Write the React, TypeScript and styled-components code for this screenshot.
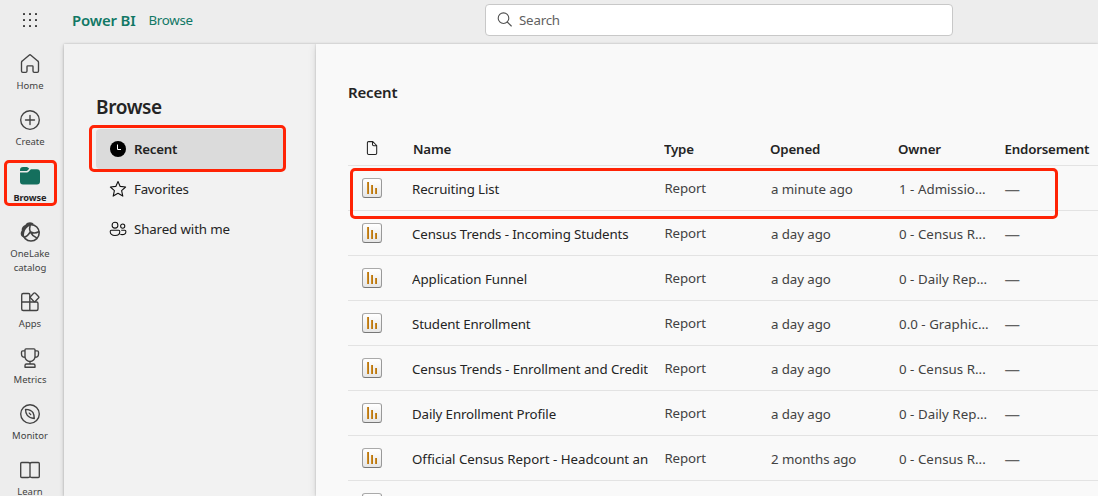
import React from "react";
import styled, { createGlobalStyle } from "styled-components";

const GlobalStyle = createGlobalStyle`
  * { box-sizing: border-box; }
  html, body { margin: 0; padding: 0; overflow: hidden; }
  body { font-family: "Noto Sans", "Open Sans", sans-serif; color: #242424; background: #ededed; }
  svg { display: block; flex: none; }
`;

const Shell = styled.div`
  width: 1098px;
  height: 496px;
  display: flex;
  flex-direction: column;
  overflow: hidden;
  background: #ededed;
`;

const TopBar = styled.header`
  height: 44px;
  flex: none;
  display: flex;
  align-items: center;
  padding: 0 0 4px 22px;
`;

const Brand = styled.span`
  margin-left: 34px;
  width: 76.5px;
  font-size: 14.9px;
  font-weight: 600;
  line-height: 20px;
  letter-spacing: -0.15px;
  color: #117865;
  white-space: nowrap;
`;

const Crumb = styled.span`
  width: 336.5px;
  font-size: 13.3px;
  letter-spacing: -0.3px;
  line-height: 20px;
  color: #117865;
`;

const SearchBox = styled.div`
  width: 468px;
  height: 32px;
  display: flex;
  align-items: center;
  gap: 6px;
  padding-left: 11px;
  border: 1px solid #c8c8c8;
  border-radius: 4px;
  background: #fff;
  color: #616161;
  font-size: 13.3px;
  letter-spacing: -0.2px;
`;

const Body = styled.div`
  flex: 1;
  min-height: 0;
  display: flex;
`;

const Rail = styled.nav`
  width: 64px;
  flex: none;
  padding-right: 4px;
`;

const RailItem = styled.div<{ $active?: boolean }>`
  position: relative;
  display: flex;
  flex-direction: column;
  align-items: center;
  gap: 5px;
  padding: 10px 0 7px;
  color: #424242;
  text-align: center;
  font-size: 9.5px;
  line-height: 14px;
  white-space: pre-line;
  ${(p) => p.$active && "color: #242424; font-weight: 700; font-size: 9.2px; letter-spacing: -0.1px;"}
`;

const Mark = styled.div<{ $x: number; $y: number; $w: number; $h: number }>`
  position: absolute;
  left: ${(p) => p.$x}px;
  top: ${(p) => p.$y}px;
  width: ${(p) => p.$w}px;
  height: ${(p) => p.$h}px;
  border: 3px solid #ff2305;
  border-radius: 5px;
  pointer-events: none;
`;

const Workspace = styled.div`
  flex: 1;
  min-width: 0;
  display: flex;
  background: #f2f2f2;
  box-shadow: 0 0 2px rgba(0, 0, 0, 0.2), 0 2px 5px rgba(0, 0, 0, 0.18);
`;

const SidePanel = styled.aside`
  width: 252px;
  flex: none;
  padding: 49px 32px 0;
`;

const PanelTitle = styled.h1`
  margin: 0 0 8px;
  font-size: 19px;
  line-height: 28px;
  font-weight: 600;
  letter-spacing: -0.35px;
`;

const SideItem = styled.div<{ $active?: boolean; $spacing: number }>`
  position: relative;
  height: 40px;
  display: flex;
  align-items: center;
  gap: 7px;
  padding-left: 13px;
  border-radius: 4px;
  font-size: 13.3px;
  letter-spacing: ${(p) => p.$spacing}px;
  background: ${(p) => (p.$active ? "#dbdbdb" : "transparent")};
  font-weight: ${(p) => (p.$active ? 600 : 400)};
`;

const Content = styled.main`
  flex: 1;
  min-width: 0;
  padding: 37px 0 0 32px;
  background: #f9f9f9;
  box-shadow: 0 0 2px rgba(0, 0, 0, 0.2), 0 2px 8px rgba(0, 0, 0, 0.13);
  clip-path: inset(0 0 0 -12px);
`;

const SectionTitle = styled.h2`
  margin: 0 0 29px;
  font-size: 15px;
  line-height: 22px;
  font-weight: 600;
  letter-spacing: -0.18px;
`;

const Row = styled.div<{ $head?: boolean }>`
  position: relative;
  display: grid;
  grid-template-columns: 64px 236px 16px 106px 128px 106px 94px;
  align-items: center;
  height: ${(p) => (p.$head ? 34 : 45)}px;
  border-bottom: 1px solid #e3e3e3;
  font-size: 13.3px;
  font-weight: ${(p) => (p.$head ? 600 : 400)};
  line-height: 20px;
`;

const Cell = styled.div<{ $spacing?: number; $shift?: number; $tone?: string; $drop?: number }>`
  min-width: 0;
  overflow: hidden;
  white-space: nowrap;
  padding-left: ${(p) => p.$shift ?? 0}px;
  padding-top: ${(p) => p.$drop ?? 0}px;
  letter-spacing: ${(p) => p.$spacing ?? 0}px;
  color: ${(p) => p.$tone ?? "#242424"};
`;

const DashCell = styled(Cell)`
  font-size: 15.5px;
`;

const IconCell = styled.div`
  padding-left: 14px;
`;

const ReportBadge = styled.div`
  width: 20px;
  height: 20px;
  border: 1px solid #8c8c8c;
  border-color: #aaa #999 #777;
  border-radius: 3px;
  background: linear-gradient(#fff, #e6e6e6);
  display: flex;
  align-items: flex-end;
  justify-content: center;
  gap: 2px;
  padding-bottom: 3px;
`;

const Bar = styled.i<{ $h: number }>`
  width: 2px;
  height: ${(p) => p.$h}px;
  background: linear-gradient(90deg, #d9962b, #ac6c0c);
`;

const Line = ({ children, w = 1.35 }: { children: React.ReactNode; w?: number }) => (
  <svg width="20" height="20" viewBox="0 0 20 20" fill="none" stroke="currentColor" strokeWidth={w} strokeLinejoin="round" strokeLinecap="round">
    {children}
  </svg>
);

const WaffleIcon = () => (
  <svg width="16" height="16" viewBox="0 0 16 16" fill="#333">
    {[2, 8, 14].map((y) => [2, 8, 14].map((x) => <rect key={`${x}-${y}`} x={x - 1} y={y - 1} width="2" height="2" rx=".4" />))}
  </svg>
);

const HomeIcon = () => (
  <Line><path d="M9.1 1.2a1.4 1.4 0 0 1 1.8 0l6.8 5.7c.5.4.8 1 .8 1.6v8.6c0 .8-.5 1.3-1.3 1.3h-2.900c-.8 0-1.300-.5-1.300-1.300v-4.500c0-.5-.3-.8-.8-.8H7.800c-.5 0-.8.3-.8.8v4.500c0 .8-.5 1.300-1.300 1.300H2.800c-.8 0-1.300-.5-1.300-1.300V8.500c0-.6.3-1.200.8-1.600Z" /></Line>
);
const CreateIcon = () => (
  <Line><circle cx="10" cy="10" r="9.300" /><path d="M10 5.500v9M5.500 10h9" /></Line>
);
const FolderIcon = () => (
  <svg width="20" height="20" viewBox="0 0 20 20" fill="#146f5d">
    <path d="M0 4.900V4a3 3 0 0 1 3-3h3.700c.5 0 .9.200 1.300.500l1.200 1.200-1.700 1.700c-.2.300-.5.500-.8.500Z" />
    <path d="M0 6.400h7c.6 0 1.100-.2 1.500-.6L10.900 3.300H17a3 3 0 0 1 3 3v9.200a3 3 0 0 1-3 3H3a3 3 0 0 1-3-3Z" />
  </svg>
);
const LakeIcon = () => (
  <Line w={1.6}>
    <circle cx="11" cy="10.800" r="8.200" />
    <path d="M5.500 2.800C6.600 1 8.200.3 10 .3s3.200.7 4 2c-2.200.3-4.200 1.200-6.100 2.700C5.500 6.800 4.100 9.500 4 12.800l-.5 2.700C1.700 14.900.7 13.600.7 11.600c0-1.100.4-2 1-2.900C1.300 6.100 3 3.700 5.500 2.800Z" fill="currentColor" stroke="none" />
    <path d="M10.100 3.500c-.8 2.500-.8 4.400.2 6.300 1.200 2.500 3.200 4.400 6 5.800M4.300 15.300c2.600-.8 4.300-2.500 6-5.500 2.600 1.600 5.500 1.500 8.500-.1" />
  </Line>
);
const AppsIcon = () => (
  <Line>
    <path d="M9.800 10V2.800c0-.8-.5-1.300-1.300-1.300H3.200c-.9 0-1.500.6-1.500 1.500V17c0 .9.600 1.500 1.500 1.500h13.300c.9 0 1.500-.6 1.500-1.500v-5.500c0-.9-.6-1.500-1.500-1.500ZM9.800 10v8.500M1.700 10h8.100" />
    <path d="m13.700 1.300-3.100 3.100c-.5.500-.5 1.200 0 1.700l3.100 3.100c.5.500 1.200.5 1.700 0l3.100-3.100c.5-.5.5-1.200 0-1.700l-3.100-3.100c-.5-.5-1.200-.5-1.700 0Z" />
  </Line>
);
const TrophyIcon = () => (
  <Line>
    <path d="M6 .8h8c.6 0 1 .4 1 1v6.700a5 5 0 0 1-10 0V1.800c0-.6.4-1 1-1ZM5 2.900H2.800c-.8 0-1.300.5-1.300 1.300V6c0 2 1.200 3.300 3.500 3.300M15 2.900h2.200c.8 0 1.300.5 1.300 1.300V6c0 2-1.200 3.300-3.500 3.300M10 13.500V16M6.500 16h7c.9 0 1.500.6 1.500 1.500v1.700H5v-1.700c0-.9.600-1.500 1.500-1.500Z" />
  </Line>
);
const MonitorIcon = () => (
  <Line><circle cx="10" cy="10" r="9.300" /><path d="M5.500 5.300c3.300.2 6.300 1.300 7.500 3.300 1 1.700 1.200 3.700 1.300 5.900-3.200-.3-5.500-1.300-7-3.200-1.300-1.700-1.800-3.700-1.800-6Z" /><path d="m9.300 9.100 1.400 1.500" /></Line>
);
const LearnIcon = () => (
  <Line><path d="M10 3.500c-.4-.7-1-1-1.800-1H1.700c-.6 0-1 .4-1 1v13c0 .6.400 1 1 1h6.500c.8 0 1.400-.3 1.800-1 .4.700 1 1 1.800 1h6.500c.6 0 1-.4 1-1v-13c0-.6-.4-1-1-1h-6.500c-.8 0-1.400.3-1.800 1Zm0 0v13" /></Line>
);

const SearchIcon = () => (
  <svg width="16" height="16" viewBox="0 0 16 16" fill="none" stroke="#505050" strokeWidth="1.100" strokeLinecap="round">
    <circle cx="6.500" cy="6.200" r="5.300" /><path d="m10.300 10 4 4" />
  </svg>
);
const ClockIcon = () => (
  <svg width="18" height="18" viewBox="0 0 18 18"><circle cx="9" cy="9" r="8" fill="#000" /><path d="M8.500 4.500v5h3.500" fill="none" stroke="#fff" /></svg>
);
const StarIcon = () => (
  <svg width="18" height="18" viewBox="0 0 18 18" fill="none" stroke="#111" strokeWidth="1.100" strokeLinejoin="round">
    <path d="m9 1.500 2.200 4.900 5.400.6-4 3.600 1.200 5.500L9 13.300l-4.800 2.800 1.200-5.500-4-3.600 5.400-.6Z" />
  </svg>
);
const PeopleIcon = () => (
  <svg width="18" height="18" viewBox="0 0 18 18" fill="none" stroke="#111" strokeWidth="1.050" strokeLinejoin="round">
    <circle cx="6" cy="5.200" r="2.900" /><circle cx="13.700" cy="6.100" r="2.100" />
    <path d="M2.300 10.300h7.400c.6 0 1.100.5 1.100 1.100 0 2.500-1.700 4.100-4.800 4.100s-4.800-1.600-4.800-4.100c0-.6.5-1.100 1.100-1.100ZM12.200 10.300h3.600c.6 0 1.100.5 1.100 1.100 0 2-1.500 3.200-3.800 3.200-.7 0-1.300-.1-1.800-.3" />
  </svg>
);
const FileIcon = () => (
  <svg width="20" height="16" viewBox="0 0 20 16" fill="none" stroke="#242424" strokeWidth="1.050" strokeLinejoin="round">
    <path d="M6.700.6h4.100l3.900 3.900v7.700c0 .8-.5 1.300-1.300 1.300H6.700c-.8 0-1.300-.5-1.300-1.300V1.900c0-.8.5-1.300 1.300-1.300ZM10.500.6v2.800c0 .8.500 1.300 1.300 1.300h2.800" />
  </svg>
);

const railItems = [
  { label: "Home", icon: <HomeIcon /> },
  { label: "Create", icon: <CreateIcon /> },
  { label: "Browse", icon: <FolderIcon />, active: true },
  { label: "OneLake\ncatalog", icon: <LakeIcon /> },
  { label: "Apps", icon: <AppsIcon /> },
  { label: "Metrics", icon: <TrophyIcon /> },
  { label: "Monitor", icon: <MonitorIcon /> },
  { label: "Learn", icon: <LearnIcon /> },
];

const rows = [
  { name: "Recruiting List", opened: "a minute ago", owner: "1 - Admissio...", marked: true, spacing: -0.12 },
  { name: "Census Trends - Incoming Students", opened: "a day ago", owner: "0 - Census R...", spacing: -0.11 },
  { name: "Application Funnel", opened: "a day ago", owner: "0 - Daily Rep...", spacing: -0.05 },
  { name: "Student Enrollment", opened: "a day ago", owner: "0.0 - Graphic...", spacing: -0.15 },
  { name: "Census Trends - Enrollment and Credit", opened: "a day ago", owner: "0 - Census R...", spacing: -0.08 },
  { name: "Daily Enrollment Profile", opened: "a day ago", owner: "0 - Daily Rep...", spacing: -0.11 },
  { name: "Official Census Report - Headcount an", opened: "2 months ago", owner: "0 - Census R...", spacing: -0.02 },
  { name: "", opened: "", owner: "", spacing: 0 },
];

export default function App() {
  return (
    <>
      <GlobalStyle />
      <Shell>
        <TopBar>
          <WaffleIcon />
          <Brand>Power BI</Brand>
          <Crumb>Browse</Crumb>
          <SearchBox><SearchIcon />Search</SearchBox>
        </TopBar>
        <Body>
          <Rail>
            {railItems.map((item) => (
              <RailItem key={item.label} $active={item.active}>
                {item.icon}
                <span>{item.label}</span>
                {item.active && <Mark $x={4} $y={4} $w={53} $h={46} />}
              </RailItem>
            ))}
          </Rail>
          <Workspace>
            <SidePanel>
              <PanelTitle>Browse</PanelTitle>
              <SideItem $active $spacing={-0.25}><ClockIcon />Recent<Mark $x={-7.5} $y={-4} $w={197.5} $h={46.5} /></SideItem>
              <SideItem $spacing={-0.25}><StarIcon />Favorites</SideItem>
              <SideItem $spacing={-0.12}><PeopleIcon />Shared with me</SideItem>
            </SidePanel>
            <Content>
              <SectionTitle>Recent</SectionTitle>
              <Row $head>
                <IconCell><FileIcon /></IconCell>
                <Cell $shift={1} $spacing={-0.2}>Name</Cell>
                <span />
                <Cell $spacing={-0.25}>Type</Cell>
                <Cell $spacing={-0.15}>Opened</Cell>
                <Cell $spacing={-0.1}>Owner</Cell>
                <Cell $spacing={-0.2} $shift={0.5}>Endorsement</Cell>
              </Row>
              {rows.map((row) => (
                <Row key={row.name}>
                  <IconCell><ReportBadge><Bar $h={12} /><Bar $h={9} /><Bar $h={6} /></ReportBadge></IconCell>
                  <Cell $spacing={row.spacing} $drop={2}>{row.name}</Cell>
                  <span />
                  <Cell $spacing={-0.15} $shift={0.5} $tone="#424242">{row.name && "Report"}</Cell>
                  <Cell $spacing={-0.08} $shift={1} $tone="#424242" $drop={2}>{row.opened}</Cell>
                  <Cell $spacing={0.03} $shift={1} $tone="#424242" $drop={2}>{row.owner}</Cell>
                  <DashCell $shift={0.5} $tone="#616161" $drop={2}>{row.name && "—"}</DashCell>
                  {row.marked && <Mark $x={2} $y={2} $w={708} $h={51} />}
                </Row>
              ))}
            </Content>
          </Workspace>
        </Body>
      </Shell>
    </>
  );
}
